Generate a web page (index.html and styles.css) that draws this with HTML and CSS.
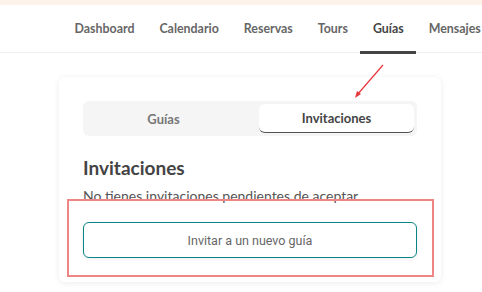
FILE: index.html
```html
<!DOCTYPE html>
<html lang="es">
<head>
  <meta charset="UTF-8" />
  <meta name="viewport" content="width=device-width, initial-scale=1.0"/>
  <title>Guías - Invitaciones</title>
  <link rel="stylesheet" href="styles.css">
</head>
<body>
  <div class="topbar"></div>

  <nav class="nav">
    <a href="#" class="nav-item">Dashboard</a>
    <a href="#" class="nav-item">Calendario</a>
    <a href="#" class="nav-item">Reservas</a>
    <a href="#" class="nav-item">Tours</a>
    <a href="#" class="nav-item active">Guías</a>
    <a href="#" class="nav-item">Mensajes</a>
  </nav>

  <main class="page">
    <div class="card">
      <div class="tabs">
        <button class="tab">Guías</button>
        <button class="tab active">Invitaciones</button>
      </div>

      <h2 class="title">Invitaciones</h2>
      <p class="empty">No tienes invitaciones pendientes de aceptar</p>

      <button class="invite-btn">Invitar a un nuevo guía</button>
    </div>

    <!-- annotations -->
    <div class="mark-box"></div>
    <svg class="mark-arrow" width="40" height="40" viewBox="0 0 40 40">
      <line x1="33" y1="2" x2="7" y2="32" stroke="#e8383d" stroke-width="1.2" />
      <path d="M5 35 L7 28 L11 31 Z" fill="#e8383d" />
    </svg>
  </main>
</body>
</html>
```

FILE: styles.css
```css
* {
  box-sizing: border-box;
  margin: 0;
  padding: 0;
}

body {
  font-family: 'Lato', sans-serif;
  background-color: #fff;
  color: #444;
  width: 482px;
  height: 292px;
  overflow: hidden;
}

.topbar {
  height: 5px;
  background-color: #fdf3ea;
}

.nav {
  display: flex;
  height: 48px;
  padding-left: 62px;
  border-bottom: 1px solid #eee;
  white-space: nowrap;
}

.nav-item {
  display: flex;
  align-items: center;
  padding: 0 12.5px;
  font-size: 12.4px;
  font-weight: bold;
  color: #666;
  text-decoration: none;
  border-bottom: 3px solid transparent;
  margin-bottom: -2px;
}

.nav-item.active {
  color: #444;
  border-bottom-color: #444;
}

.page {
  position: relative;
  padding: 24px 41px 0 59px;
}

.card {
  width: 382px;
  background-color: #fff;
  border-radius: 6px;
  padding: 24px;
  box-shadow: 0 1px 6px rgba(0, 0, 0, 0.08);
}

.tabs {
  display: grid;
  grid-template-columns: 1fr 1fr;
  gap: 18px;
  padding: 3px;
  background-color: #f5f5f5;
  border-radius: 6px;
}

.tab {
  height: 29px;
  border: none;
  background: none;
  border-radius: 6px;
  font-family: 'Lato', sans-serif;
  font-size: 13px;
  font-weight: bold;
  color: #777;
  cursor: pointer;
}

.tab.active {
  background-color: #fff;
  color: #444;
  border-bottom: 1.5px solid #555;
}

.title {
  margin-top: 20px;
  font-size: 19px;
  font-weight: bold;
  color: #444;
}

.empty {
  margin-top: 8px;
  font-size: 14px;
  color: #555;
}

.invite-btn {
  display: block;
  width: 100%;
  height: 36px;
  margin-top: 18px;
  background-color: #fff;
  border: 1px solid #0a8585;
  border-radius: 6px;
  font-family: 'Roboto', sans-serif;
  font-size: 12.5px;
  color: #666;
  box-shadow: 0 1px 4px rgba(0, 0, 0, 0.08);
  cursor: pointer;
}

.mark-box {
  position: absolute;
  left: 67px;
  top: 146px;
  width: 367px;
  height: 78px;
  border: 2px solid #ee8686;
}

.mark-arrow {
  position: absolute;
  left: 350px;
  top: 10px;
}
```
